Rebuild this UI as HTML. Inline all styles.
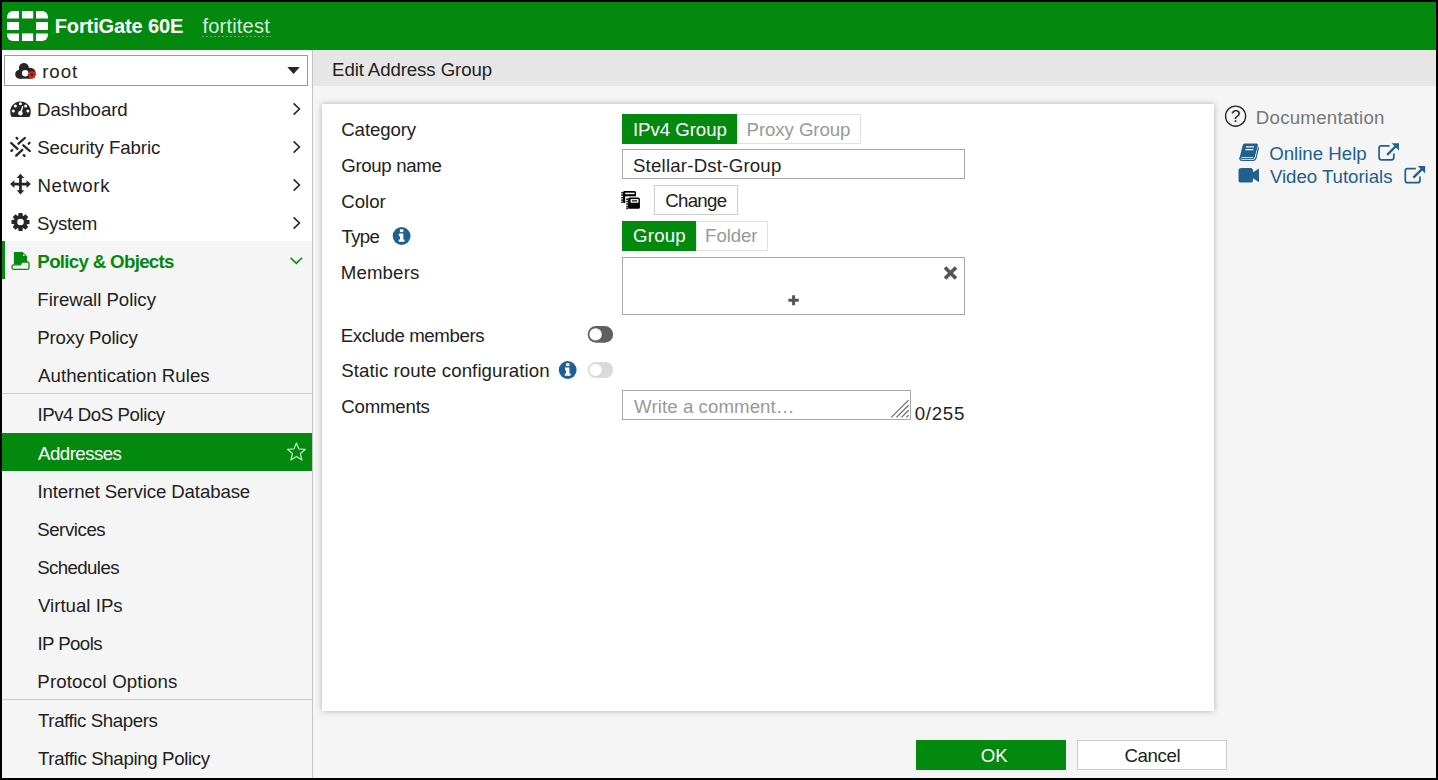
<!DOCTYPE html>
<html lang="en"><head><meta charset="utf-8"><title>FortiGate - Edit Address Group</title>
<style>
html,body{margin:0;padding:0;}
body{width:1438px;height:780px;overflow:hidden;background:#f5f5f5;font-family:"Liberation Sans",sans-serif;font-size:18.67px;color:#222;position:relative;}
.a{position:absolute;box-sizing:border-box;}
.t{position:absolute;white-space:nowrap;line-height:1;font-family:"Liberation Sans",sans-serif;}
svg{position:absolute;overflow:visible;}
#frame{position:absolute;left:0;top:0;width:1438px;height:780px;box-sizing:border-box;border:2px solid #000;z-index:50;pointer-events:none;}
#hdr{left:0;top:0;width:1438px;height:50px;background:#04890f;}
#side{left:2px;top:50px;width:310px;height:730px;background:#fff;}
#sideb{left:312px;top:50px;width:1px;height:730px;background:#c4c4c4;}
#sect{left:2px;top:241px;width:310px;height:539px;background:#f5f5f5;}
#bar{left:2px;top:241px;width:3px;height:38px;background:#04890f;}
#sel{left:4px;top:55px;width:304px;height:31px;border:1px solid #999;background:#fff;}
.dv{left:2px;width:310px;height:1px;background:#ccc;}
#act{left:2px;top:433px;width:310px;height:38px;background:#04890f;}
#title{left:313px;top:50px;width:1123px;height:36px;background:#e6e6e6;}
#card{left:322px;top:104px;width:892px;height:607px;background:#fff;box-shadow:0 0 6px rgba(0,0,0,.28);}
.bg{background:#04890f;}
.bo{background:#fff;border:1px solid #e0e0e0;}
.in{background:#fff;border:1px solid #a8a8a8;}
.bt{background:#fff;border:1px solid #ccc;}

</style></head>
<body>
<header>
<div class="a" id="hdr"></div>
<span class="t" style="left:54.79px;top:16px;font-size:20px;letter-spacing:-0.132px;color:#fff;font-weight:700;">FortiGate 60E</span>
<span class="t" style="left:202.52px;top:16px;font-size:20px;letter-spacing:0.201px;color:#d9eedb;">fortitest</span>
</header>
<nav>
<div class="a" id="side"></div>
<div class="a" id="sect"></div>
<div class="a" id="bar"></div>
<div class="a" id="sideb"></div>
<div class="a" id="sel"></div>
<div class="a dv" style="top:393px"></div>
<div class="a dv" style="top:699px"></div>
<div class="a" id="act"></div>
<svg class="a" style="left:0;top:0" width="1438" height="780" viewBox="0 0 1438 780">
<g fill="#fff">
<path d="M7,18.5 V17 A6,6 0 0 1 13,11 H19 V18.5Z"/>
<rect x="22" y="11" width="11.2" height="7.5"/>
<path d="M36,11 H42 A6,6 0 0 1 48,17 V18.5 H36Z"/>
<rect x="7" y="22" width="12" height="8"/>
<rect x="36" y="22" width="12" height="8"/>
<path d="M7,33.4 H19 V41 H13 A6,6 0 0 1 7,35Z"/>
<rect x="22" y="33.4" width="11.2" height="7.6"/>
<path d="M36,33.4 H48 V35 A6,6 0 0 1 42,41 H36Z"/>
</g>
<line x1="202.3" y1="36.5" x2="271" y2="36.5" stroke="#8fca95" stroke-width="1" stroke-dasharray="1.3,2.7"/>
<g fill="#262626"><circle cx="23.9" cy="68.1" r="5"/><circle cx="19.7" cy="74.2" r="4.5"/><circle cx="30.3" cy="73.1" r="5.4"/><rect x="19.7" y="70.5" width="10.8" height="8.2"/><path d="M26,66.5 L30.5,68.6 L26,72Z"/></g>
<circle cx="25.2" cy="73.2" r="3.2" fill="#fff"/>
<path d="M31.00,72.04 L31.08,70.68 L32.72,70.68 L32.80,72.04 L33.22,72.22 L34.23,71.31 L35.39,72.47 L34.48,73.48 L34.66,73.90 L36.02,73.98 L36.02,75.62 L34.66,75.70 L34.48,76.12 L35.39,77.13 L34.23,78.29 L33.22,77.38 L32.80,77.56 L32.72,78.92 L31.08,78.92 L31.00,77.56 L30.58,77.38 L29.57,78.29 L28.41,77.13 L29.32,76.12 L29.14,75.70 L27.78,75.62 L27.78,73.98 L29.14,73.90 L29.32,73.48 L28.41,72.47 L29.57,71.31 L30.58,72.22Z M33.10,74.80 A1.2,1.2 0 1 0 30.70,74.80 A1.2,1.2 0 1 0 33.10,74.80Z" fill="#e8201c" fill-rule="evenodd"/>
<circle cx="31.9" cy="74.8" r="1.2" fill="#0e2a1a"/>
<path d="M287.3,67 H299.8 L293.55,74Z" fill="#262626"/>
<path d="M12.1,117 Q11.6,117 11.3,116.4 A10.3,10.3 0 1 1 29.7,116.4 Q29.4,117 28.9,117Z" fill="#262626"/>
<circle cx="13.3" cy="110.9" r="1.5" fill="#fff"/>
<circle cx="15.4" cy="105.9" r="1.5" fill="#fff"/>
<circle cx="20.4" cy="103.7" r="1.5" fill="#fff"/>
<circle cx="25.6" cy="105.9" r="1.5" fill="#fff"/>
<circle cx="27.9" cy="110.9" r="1.5" fill="#fff"/>
<path d="M22.3,106 L23.4,106.3 L21.7,112.6 L19.9,112.1Z" fill="#fff"/><circle cx="20.4" cy="113.3" r="2.25" fill="#fff"/>
<g stroke="#262626" stroke-width="2.3" stroke-linecap="round" fill="none">
<line x1="18.5" y1="143.7" x2="24.8" y2="138.0"/>
<line x1="11.2" y1="143.0" x2="17.5" y2="148.9"/>
<line x1="23.3" y1="145.3" x2="29.8" y2="151.0"/>
<line x1="16.2" y1="155.6" x2="22.3" y2="149.9"/>
<line x1="16.6" y1="137.9" x2="17.4" y2="138.7"/>
<line x1="28.7" y1="143.7" x2="29.5" y2="142.9"/>
<line x1="11.4" y1="150.9" x2="12.2" y2="150.1"/>
<line x1="23.7" y1="155.1" x2="24.5" y2="155.9"/>
</g>
<path d="M20.45,173.7 L24.25,178.0 H21.8 V182.75 H26.55 V180.3 L30.85,184.1 L26.55,187.9 V185.45 H21.8 V190.2 H24.25 L20.45,194.5 L16.65,190.2 H19.1 V185.45 H14.35 V187.9 L10.05,184.1 L14.35,180.3 V182.75 H19.1 V178.0 H16.65Z" fill="#262626"/>
<path d="M18.18,215.71 L18.56,213.01 L22.44,213.01 L22.82,215.71 L23.31,215.92 L25.49,214.27 L28.23,217.01 L26.58,219.19 L26.79,219.68 L29.49,220.06 L29.49,223.94 L26.79,224.32 L26.58,224.81 L28.23,226.99 L25.49,229.73 L23.31,228.08 L22.82,228.29 L22.44,230.99 L18.56,230.99 L18.18,228.29 L17.69,228.08 L15.51,229.73 L12.77,226.99 L14.42,224.81 L14.21,224.32 L11.51,223.94 L11.51,220.06 L14.21,219.68 L14.42,219.19 L12.77,217.01 L15.51,214.27 L17.69,215.92Z M23.80,222.00 A3.3,3.3 0 1 0 17.20,222.00 A3.3,3.3 0 1 0 23.80,222.00Z" fill="#262626" fill-rule="evenodd"/>
<path d="M13.9,252 H22.7 L27,256.3 V262 H22 L20.2,264.8 H13.9Z" fill="#04890f"/>
<path d="M23,253.9 L25.2,256.1 H23Z" fill="#f5f5f5"/>
<path d="M13.8,264.8 H20.4 L22.2,262 H27.2 A1.8,1.8 0 0 1 29,263.8 V267.5 A1.8,1.8 0 0 1 27.2,269.3 H13.8 A1.8,1.8 0 0 1 12,267.5 V266.6 A1.8,1.8 0 0 1 13.8,264.8Z" fill="#f5f5f5" stroke="#04890f" stroke-width="1.3"/>
<path d="M293.6,103.4 L299.4,109 L293.6,114.6" fill="none" stroke="#262626" stroke-width="1.6"/>
<path d="M293.6,141.4 L299.4,147 L293.6,152.6" fill="none" stroke="#262626" stroke-width="1.6"/>
<path d="M293.6,179.4 L299.4,185 L293.6,190.6" fill="none" stroke="#262626" stroke-width="1.6"/>
<path d="M293.6,217.4 L299.4,223 L293.6,228.6" fill="none" stroke="#262626" stroke-width="1.6"/>
<path d="M290.6,257.7 L296.3,263.4 L302,257.7" fill="none" stroke="#04890f" stroke-width="1.6"/>
</svg>
<span class="t" style="left:42.19px;top:63px;font-size:18.67px;letter-spacing:0.932px;color:#222;">root</span>
<span class="t" style="left:37.12px;top:101px;font-size:18.67px;letter-spacing:-0.085px;color:#222;">Dashboard</span>
<span class="t" style="left:37.15px;top:139px;font-size:18.67px;letter-spacing:-0.085px;color:#222;">Security Fabric</span>
<span class="t" style="left:37.51px;top:177px;font-size:18.67px;letter-spacing:0.592px;color:#222;">Network</span>
<span class="t" style="left:36.97px;top:215px;font-size:18.67px;letter-spacing:-0.38px;color:#222;">System</span>
<span class="t" style="left:37.37px;top:253px;font-size:18.67px;letter-spacing:-0.673px;color:#04890f;font-weight:700;">Policy &amp; Objects</span>
<span class="t" style="left:37.33px;top:291px;font-size:18.67px;letter-spacing:-0.042px;color:#222;">Firewall Policy</span>
<span class="t" style="left:37.33px;top:329px;font-size:18.67px;letter-spacing:-0.203px;color:#222;">Proxy Policy</span>
<span class="t" style="left:38.06px;top:367px;font-size:18.67px;letter-spacing:0.026px;color:#222;">Authentication Rules</span>
<span class="t" style="left:37.44px;top:406px;font-size:18.67px;letter-spacing:-0.431px;color:#222;">IPv4 DoS Policy</span>
<span class="t" style="left:38.06px;top:445px;font-size:18.67px;letter-spacing:-0.531px;color:#fff;">Addresses</span>
<span class="t" style="left:37.44px;top:483px;font-size:18.67px;letter-spacing:-0.121px;color:#222;">Internet Service Database</span>
<span class="t" style="left:37.17px;top:521px;font-size:18.67px;letter-spacing:-0.432px;color:#222;">Services</span>
<span class="t" style="left:37.17px;top:559px;font-size:18.67px;letter-spacing:-0.597px;color:#222;">Schedules</span>
<span class="t" style="left:37.93px;top:597px;font-size:18.67px;letter-spacing:0.006px;color:#222;">Virtual IPs</span>
<span class="t" style="left:37.44px;top:635px;font-size:18.67px;letter-spacing:-0.578px;color:#222;">IP Pools</span>
<span class="t" style="left:37.33px;top:673px;font-size:18.67px;letter-spacing:0.136px;color:#222;">Protocol Options</span>
<span class="t" style="left:38.01px;top:712px;font-size:18.67px;letter-spacing:-0.394px;color:#222;">Traffic Shapers</span>
<span class="t" style="left:38.01px;top:750px;font-size:18.67px;letter-spacing:-0.345px;color:#222;">Traffic Shaping Policy</span>
</nav>
<main>
<div class="a" id="title"></div>
<div class="a" id="card"></div>
<div class="a bg" style="left:622px;top:114px;width:115px;height:30px"></div>
<div class="a bo" style="left:737px;top:114px;width:124px;height:30px"></div>
<div class="a in" style="left:622px;top:149px;width:343px;height:30px"></div>
<div class="a bt" style="left:654px;top:185px;width:84px;height:30px"></div>
<div class="a bg" style="left:622px;top:221px;width:74px;height:30px"></div>
<div class="a bo" style="left:696px;top:221px;width:72px;height:30px"></div>
<div class="a in" style="left:622px;top:257px;width:343px;height:58px"></div>
<div class="a in" style="left:622px;top:390px;width:289px;height:30px"></div>
<svg class="a" style="left:0;top:0;z-index:5" width="1438" height="780" viewBox="0 0 1438 780">
<path d="M296.40,443.00 L298.87,448.90 L305.24,449.43 L300.39,453.60 L301.87,459.82 L296.40,456.50 L290.93,459.82 L292.41,453.60 L287.56,449.43 L293.93,448.90Z" fill="none" stroke="#bfe3c3" stroke-width="1.3" stroke-linejoin="round"/>
<g>
<rect x="623" y="191" width="13" height="12" rx="1.5" fill="#000"/>
<rect x="625.2" y="192.7" width="9.4" height="1.5" fill="#fff"/>
<rect x="621.2" y="191.9" width="2.2" height="1.6" fill="#222"/>
<rect x="621.2" y="194.3" width="2.2" height="1.6" fill="#222"/>
<rect x="621.2" y="196.8" width="2.2" height="1.6" fill="#222"/>
<rect x="621.2" y="199.3" width="2.2" height="1.6" fill="#222"/>
<rect x="621.2" y="201.5" width="2.2" height="1.6" fill="#222"/>
<rect x="625.2" y="196.3" width="15.6" height="13.5" fill="#fff"/>
<rect x="628.1" y="197.5" width="11.8" height="11.3" rx="1.5" fill="#000"/>
<rect x="630.6" y="199.1" width="7.9" height="3.6" fill="#fff"/>
<rect x="631.9" y="200.2" width="5.2" height="1.3" fill="#222"/>
<rect x="626.2" y="198.4" width="2.1" height="1.6" fill="#222"/>
<rect x="626.2" y="200.7" width="2.1" height="1.6" fill="#222"/>
<rect x="626.2" y="203.2" width="2.1" height="1.6" fill="#222"/>
<rect x="626.2" y="205.7" width="2.1" height="1.6" fill="#222"/>
<rect x="626.2" y="207.6" width="2.1" height="1.6" fill="#222"/>
</g>
<circle cx="401.6" cy="236" r="8.9" fill="#1f5f94"/>
<g fill="#fff"><rect x="399.9" y="229.3" width="3.4" height="2.8"/><path d="M398.9,233.5 H403.3 V239.6 H404.5 V241.8 H398.7 V239.6 H400.0 V236.3 H398.9Z"/></g>
<circle cx="567.7" cy="370" r="8.9" fill="#1f5f94"/>
<g fill="#fff"><rect x="566.0" y="363.3" width="3.4" height="2.8"/><path d="M565.0,367.5 H569.4 V373.6 H570.6 V375.8 H564.8 V373.6 H566.1 V370.3 H565.0Z"/></g>
<path d="M945,267.5 L956,278.5 M956,267.5 L945,278.5" stroke="#555" stroke-width="3.6" fill="none"/>
<path d="M793.6,295.2 V305.2 M788.4,300.2 H798.8" stroke="#555" stroke-width="3" fill="none"/>
<rect x="587.7" y="326.1" width="25.4" height="16.6" rx="8.3" fill="#5f5f5f"/><circle cx="595.6" cy="334.4" r="6.2" fill="#fff"/>
<rect x="587.7" y="362" width="25.4" height="16" rx="8" fill="#dadada"/><circle cx="595.6" cy="370" r="6.1" fill="#fff"/>
<g stroke="#6e6e6e" stroke-width="1.3"><line x1="891.3" y1="417.4" x2="908.6" y2="400.1"/><line x1="896.4" y1="417.4" x2="908.6" y2="405.2"/><line x1="901.4" y1="417.4" x2="908.6" y2="410.2"/><line x1="906.3" y1="417.4" x2="908.6" y2="415.1"/></g>
<circle cx="1235.6" cy="116.2" r="10.05" fill="none" stroke="#262626" stroke-width="1.35"/>
<path d="M1244.6,143.4 H1256.4 Q1258.4,143.4 1257.9,145.4 L1254.6,157.6 Q1254.2,159 1253,159 H1241.6 Q1239.2,159 1239.9,156.6 L1242.8,145 Q1243.2,143.4 1244.6,143.4Z" fill="#22608f"/>
<path d="M1246,146.9 H1254 M1245.4,149.6 H1253.4" stroke="#f5f5f5" stroke-width="1.2"/>
<path d="M1240,157.4 Q1239.3,160.3 1242,160.3 H1253.6 Q1255.4,160.3 1255.9,158.4 L1258.6,147.4" fill="none" stroke="#22608f" stroke-width="1.2"/>
<path d="M1241.2,157.6 H1253.4" stroke="#f5f5f5" stroke-width="0.9"/>
<rect x="1238.5" y="168" width="14.5" height="14.6" rx="2.6" fill="#22608f"/><path d="M1252.6,172.6 L1259,168.4 V182.2 L1252.6,178Z" fill="#22608f"/>
<g transform="translate(0,0)" fill="none" stroke="#22608f"><path d="M1389.6,145.8 H1381.4 A2.3,2.3 0 0 0 1379.1,148.1 V157.5 A2.3,2.3 0 0 0 1381.4,159.8 H1391.5 A2.3,2.3 0 0 0 1393.8,157.5 V153.6" stroke-width="1.7"/><path d="M1387.2,154.8 L1396,146" stroke-width="2.4"/><path d="M1391.6,143.2 H1399 V150.6Z" fill="#22608f" stroke="none"/></g>
<g transform="translate(26.2,22.9)" fill="none" stroke="#22608f"><path d="M1389.6,145.8 H1381.4 A2.3,2.3 0 0 0 1379.1,148.1 V157.5 A2.3,2.3 0 0 0 1381.4,159.8 H1391.5 A2.3,2.3 0 0 0 1393.8,157.5 V153.6" stroke-width="1.7"/><path d="M1387.2,154.8 L1396,146" stroke-width="2.4"/><path d="M1391.6,143.2 H1399 V150.6Z" fill="#22608f" stroke="none"/></g>
</svg>
<span class="t" style="left:332.1px;top:61px;font-size:18.67px;letter-spacing:-0.107px;color:#222;">Edit Address Group</span>
<span class="t" style="left:341.28px;top:121px;font-size:18.67px;letter-spacing:-0.114px;color:#222;">Category</span>
<span class="t" style="left:341.31px;top:157px;font-size:18.67px;letter-spacing:-0.36px;color:#222;">Group name</span>
<span class="t" style="left:341.28px;top:193px;font-size:18.67px;letter-spacing:-0.026px;color:#222;">Color</span>
<span class="t" style="left:341.59px;top:228px;font-size:18.67px;letter-spacing:-0.736px;color:#222;">Type</span>
<span class="t" style="left:340.74px;top:264px;font-size:18.67px;letter-spacing:0.137px;color:#222;">Members</span>
<span class="t" style="left:340.74px;top:327px;font-size:18.67px;letter-spacing:-0.384px;color:#222;">Exclude members</span>
<span class="t" style="left:341.15px;top:362px;font-size:18.67px;letter-spacing:0.084px;color:#222;">Static route configuration</span>
<span class="t" style="left:341.28px;top:398px;font-size:18.67px;letter-spacing:-0.217px;color:#222;">Comments</span>
<span class="t" style="left:632.89px;top:121px;font-size:18.67px;letter-spacing:-0.04px;color:#fff;">IPv4 Group</span>
<span class="t" style="left:746.53px;top:121px;font-size:18.67px;letter-spacing:-0.079px;color:#999;">Proxy Group</span>
<span class="t" style="left:632.97px;top:157px;font-size:18.67px;letter-spacing:0.201px;color:#222;">Stellar-Dst-Group</span>
<span class="t" style="left:665.3px;top:192px;font-size:18.67px;letter-spacing:-0.727px;color:#222;">Change</span>
<span class="t" style="left:633.1px;top:227px;font-size:18.67px;letter-spacing:0.174px;color:#fff;">Group</span>
<span class="t" style="left:705.12px;top:227px;font-size:18.67px;letter-spacing:-0.123px;color:#999;">Folder</span>
<span class="t" style="left:634.12px;top:398px;font-size:18.67px;letter-spacing:0.07px;color:#999;">Write a comment…</span>
<span class="t" style="left:914.8px;top:405px;font-size:18.67px;letter-spacing:0.696px;color:#222;">0/255</span>
</main>
<aside>
<span class="t" style="left:1255.74px;top:109px;font-size:18.67px;letter-spacing:0.272px;color:#777;">Documentation</span>
<span class="t" style="left:1269.21px;top:145px;font-size:18.67px;letter-spacing:-0.003px;color:#22608f;">Online Help</span>
<span class="t" style="left:1269.91px;top:168px;font-size:18.67px;letter-spacing:-0.033px;color:#22608f;">Video Tutorials</span>
<span class="t" style="left:1230.9px;top:107.6px;font-size:17px;color:#262626;z-index:6">?</span>
</aside>
<footer>
<div class="a bg" style="left:916px;top:740px;width:150px;height:30px"></div>
<div class="a bt" style="left:1077px;top:740px;width:150px;height:30px"></div>
<span class="t" style="left:980.75px;top:747px;font-size:18.67px;letter-spacing:0.058px;color:#fff;">OK</span>
<span class="t" style="left:1124.47px;top:747px;font-size:18.67px;letter-spacing:-0.404px;color:#222;">Cancel</span>
</footer>
<div id="frame"></div>

</body></html>
